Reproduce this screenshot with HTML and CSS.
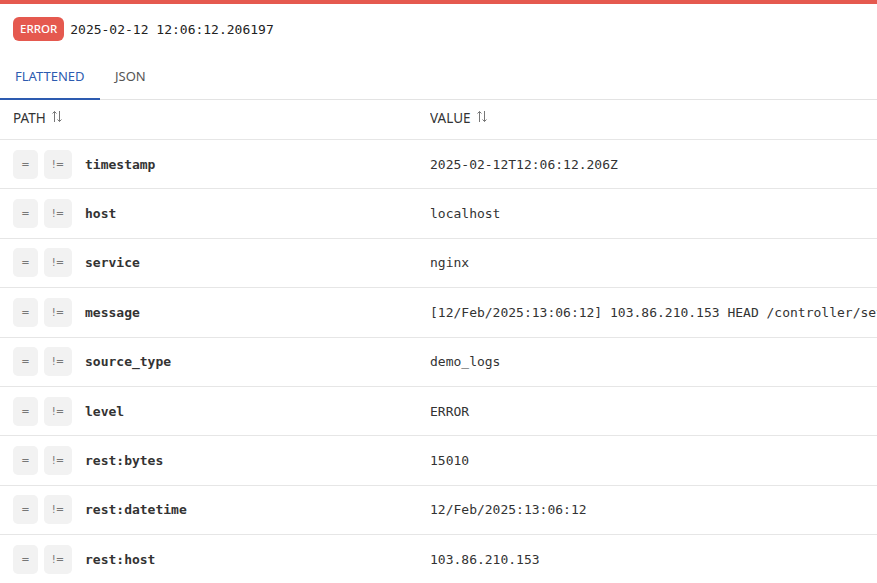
FILE: index.html
```html
<!DOCTYPE html>
<html>
<head>
<meta charset="utf-8">
<link rel="stylesheet" href="styles.css">
</head>
<body>
<div class="topbar"></div>
<div class="head">
  <span class="badge">ERROR</span>
  <span class="ts">2025-02-12 12:06:12.206197</span>
</div>
<div class="tabs">
  <div class="tab active">FLATTENED</div>
  <div class="tab">JSON</div>
</div>
<div class="table">
  <div class="row hdr">
    <div class="c1">PATH <svg class="sort" width="12" height="13" viewBox="0 0 12 13"><path d="M3.5 12V1.5M1.5 3.5L3.5 1.5L5.5 3.5M8.5 1V11.5M6.5 9.5L8.5 11.5L10.5 9.5" fill="none" stroke="#777" stroke-width="1"/></svg></div>
    <div class="c2">VALUE <svg class="sort" width="12" height="13" viewBox="0 0 12 13"><path d="M3.5 12V1.5M1.5 3.5L3.5 1.5L5.5 3.5M8.5 1V11.5M6.5 9.5L8.5 11.5L10.5 9.5" fill="none" stroke="#777" stroke-width="1"/></svg></div>
  </div>
  <div class="row"><div class="c1"><span class="btn eq">=</span><span class="btn ne">!=</span><span class="key">timestamp</span></div><div class="c2 val">2025-02-12T12:06:12.206Z</div></div>
  <div class="row"><div class="c1"><span class="btn eq">=</span><span class="btn ne">!=</span><span class="key">host</span></div><div class="c2 val">localhost</div></div>
  <div class="row"><div class="c1"><span class="btn eq">=</span><span class="btn ne">!=</span><span class="key">service</span></div><div class="c2 val">nginx</div></div>
  <div class="row"><div class="c1"><span class="btn eq">=</span><span class="btn ne">!=</span><span class="key">message</span></div><div class="c2 val">[12/Feb/2025:13:06:12] 103.86.210.153 HEAD /controller/setup HTTP/1.1</div></div>
  <div class="row"><div class="c1"><span class="btn eq">=</span><span class="btn ne">!=</span><span class="key">source_type</span></div><div class="c2 val">demo_logs</div></div>
  <div class="row"><div class="c1"><span class="btn eq">=</span><span class="btn ne">!=</span><span class="key">level</span></div><div class="c2 val">ERROR</div></div>
  <div class="row"><div class="c1"><span class="btn eq">=</span><span class="btn ne">!=</span><span class="key">rest:bytes</span></div><div class="c2 val">15010</div></div>
  <div class="row"><div class="c1"><span class="btn eq">=</span><span class="btn ne">!=</span><span class="key">rest:datetime</span></div><div class="c2 val">12/Feb/2025:13:06:12</div></div>
  <div class="row"><div class="c1"><span class="btn eq">=</span><span class="btn ne">!=</span><span class="key">rest:host</span></div><div class="c2 val">103.86.210.153</div></div>
</div>
</body>
</html>
```
FILE: styles.css
```css
html, body {
  margin: 0;
  padding: 0;
  background: #fff;
  overflow: hidden;
}
body {
  font-family: "Noto Sans", "Open Sans", sans-serif;
  color: #333;
  width: 877px;
}
.topbar {
  height: 4px;
  background: #e5594f;
}
.head {
  display: flex;
  align-items: center;
  gap: 6px;
  padding: 13px 13px 0 13px;
  height: 24px;
}
.badge {
  background: #e5594f;
  color: #fff;
  font-size: 11.5px;
  font-weight: 500;
  height: 24px;
  line-height: 24px;
  padding: 0 7px;
  border-radius: 6px;
}
.ts {
  font-family: "DejaVu Sans Mono", monospace;
  font-size: 13px;
  color: #222;
}
.tabs {
  display: flex;
  border-bottom: 1px solid #e3e3e3;
  height: 58px;
}
.tab {
  font-size: 13px;
  padding: 25px 15px 0 15px;
  line-height: 20px;
  color: #555;
  box-sizing: border-box;
}
.tab.active {
  color: #2d5bb0;
  width: 100px;
  border-bottom: 2px solid #2d5bb0;
  height: 59px;
}
.row {
  display: flex;
  align-items: center;
  border-bottom: 1px solid #e6e6e6;
  height: 49.4px;
  box-sizing: border-box;
}
.row.hdr {
  height: 40px;
  padding-bottom: 3px;
  font-size: 13.5px;
  color: #333;
}
.c1 {
  width: 417px;
  padding-left: 13px;
  display: flex;
  align-items: center;
}
.c2 {
  flex: 1;
  white-space: nowrap;
  overflow: hidden;
  display: flex;
  align-items: center;
}
.sort {
  margin-left: 5px;
  margin-top: -3px;
}
.btn {
  background: #f2f2f2;
  border-radius: 5px;
  height: 29px;
  display: inline-flex;
  align-items: center;
  justify-content: center;
  font-size: 10px;
  color: #777;
  font-family: "DejaVu Sans", sans-serif;
}
.btn.eq { width: 25px; }
.btn.ne { width: 28px; margin-left: 6px; }
.key {
  margin-left: 13px;
  font-family: "DejaVu Sans Mono", monospace;
  font-size: 13px;
  font-weight: bold;
  color: #333;
}
.val {
  font-family: "DejaVu Sans Mono", monospace;
  font-size: 13px;
  color: #333;
}
```
